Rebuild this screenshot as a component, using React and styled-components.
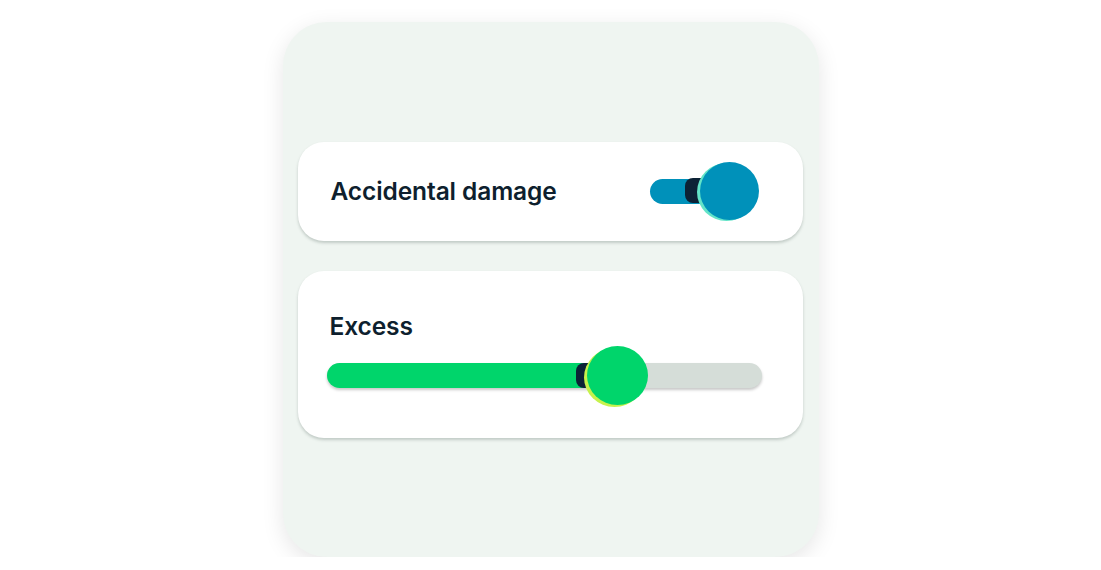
import styled, { createGlobalStyle } from "styled-components";

const GlobalStyle = createGlobalStyle`
  body {
    margin: 0;
    background: #ffffff;
    font-family: Inter, "Liberation Sans", sans-serif;
  }
`;

function App() {
  const value = 60;

  return (
    <>
      <GlobalStyle />
      <Page>
        <Panel>
          <ToggleCard>
            <Label>Accidental damage</Label>
            <Switch>
              <SwitchTrack />
              <SwitchNotch />
              <SwitchKnob />
            </Switch>
          </ToggleCard>
          <SliderCard>
            <Label $indent>Excess</Label>
            <Slider>
              <SliderTrack>
                <SliderFill style={{ width: `${value}%` }} />
              </SliderTrack>
              <SliderNotch style={{ left: `calc(${value}% - 12px)` }} />
              <SliderKnob style={{ left: `calc(${value}% - 1px)` }} />
            </Slider>
          </SliderCard>
        </Panel>
      </Page>
    </>
  );
}
export default App;

const Page = styled.div`
  display: flex;
  justify-content: center;
  padding-top: 22px;
`;
const Panel = styled.div`
  display: flex;
  flex-direction: column;
  justify-content: center;
  gap: 30px;
  box-sizing: border-box;
  width: 536px;
  height: 535px;
  padding: 0 16px 0 15px;
  border-radius: 44px;
  background-color: #eff5f1;
  box-shadow: 0 6px 22px rgba(0, 0, 0, 0.1);
`;
const Card = styled.div`
  box-sizing: border-box;
  border-radius: 26px;
  background-color: #ffffff;
  box-shadow: 0 2px 3px rgba(60, 80, 70, 0.25);
`;
const ToggleCard = styled(Card)`
  display: flex;
  align-items: center;
  justify-content: space-between;
  height: 99px;
  padding: 0 44px 0 33px;
`;
const SliderCard = styled(Card)`
  display: flex;
  flex-direction: column;
  height: 167px;
  padding: 43px 41px 0 29px;
`;
const Label = styled.div`
  margin-left: ${(props) => (props.$indent ? "3px" : "0")};
  color: #0e1f2e;
  font-size: 24.5px;
  font-weight: 600;
  line-height: 24px;
  letter-spacing: -0.1px;
`;
const Switch = styled.div`
  position: relative;
  display: flex;
  align-items: center;
  width: 109px;
  height: 58px;
`;
const SwitchTrack = styled.div`
  width: 84px;
  height: 25px;
  border-radius: 13px;
  background-color: #0091ba;
`;
const SwitchNotch = styled.div`
  position: absolute;
  left: 35px;
  top: 16px;
  width: 24px;
  height: 25px;
  border-radius: 8px 0 0 8px;
  background-color: #0c2236;
`;
const SwitchKnob = styled.div`
  position: absolute;
  right: 0;
  top: 0;
  width: 59px;
  height: 58px;
  border-radius: 50%;
  background-color: #0091ba;
  box-shadow: -3px 1px 0 #63e4c8;
`;
const Slider = styled.div`
  position: relative;
  display: flex;
  align-items: center;
  height: 60px;
  margin-top: 8px;
`;
const SliderTrack = styled.div`
  flex: 1;
  height: 25px;
  overflow: hidden;
  border-radius: 13px;
  background-color: #d5ddd8;
  box-shadow: 0 2px 3px rgba(0, 0, 0, 0.22);
`;
const SliderFill = styled.div`
  height: 100%;
  background-color: #00d56b;
`;
const SliderNotch = styled.div`
  position: absolute;
  top: 17px;
  width: 24px;
  height: 25px;
  border-radius: 8px 0 0 8px;
  background-color: #0c2236;
`;
const SliderKnob = styled.div`
  position: absolute;
  top: 0;
  width: 61px;
  height: 59px;
  border-radius: 50%;
  background-color: #00d56b;
  box-shadow: -3px 2px 0 #c6f24c;
`;
